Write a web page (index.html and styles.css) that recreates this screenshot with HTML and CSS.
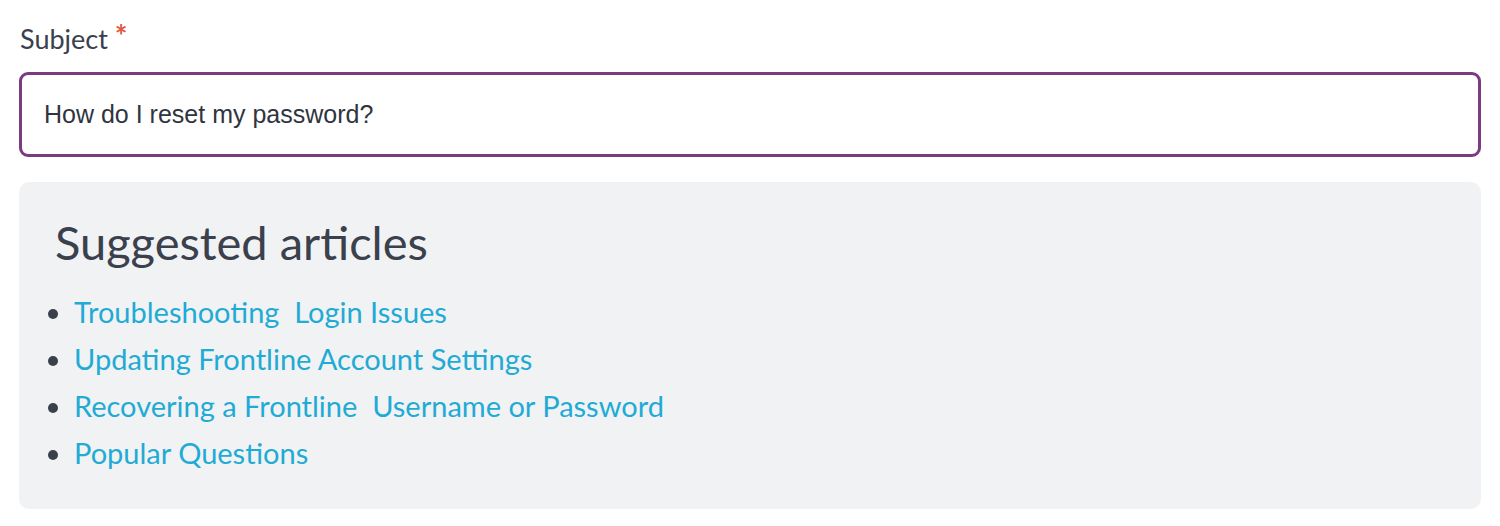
FILE: index.html
```html
<!DOCTYPE html>
<html>
<head>
<meta charset="utf-8">
<link rel="stylesheet" href="styles.css">
</head>
<body>
<div class="field">
  <label class="label">Subject <span class="req">*</span></label>
  <div class="input">How do I reset my password?</div>
</div>
<div class="suggest">
  <h2 class="suggest-title">Suggested articles</h2>
  <ul class="list">
    <li><a href="#">Troubleshooting&nbsp; Login Issues</a></li>
    <li><a href="#">Updating Frontline Account Settings</a></li>
    <li><a href="#">Recovering a Frontline&nbsp; Username or Password</a></li>
    <li><a href="#">Popular Questions</a></li>
  </ul>
</div>
</body>
</html>
```
FILE: styles.css
```css
html, body {
  margin: 0;
  padding: 0;
  background: #ffffff;
}
body {
  padding: 13px 19px 0 19px;
  font-family: Lato, "Liberation Sans", sans-serif;
  color: #3a404c;
}
.field {
  display: flex;
  flex-direction: column;
}
.label {
  font-size: 27px;
  line-height: 44px;
  color: #3a404c;
  padding-left: 1px;
}
.req {
  color: #e0593f;
  font-size: 30px;
  font-weight: 700;
  vertical-align: 2px;
}
.input {
  margin-top: 11px;
  border: 3px solid #7b3a82;
  border-radius: 9px;
  box-sizing: border-box;
  height: 85px;
  display: flex;
  align-items: center;
  padding-left: 22px;
  font-family: "Liberation Sans", Arial, sans-serif;
  font-size: 25px;
  color: #2f3540;
  margin-bottom: 25px;
}
.suggest {
  background: #f1f2f4;
  border-radius: 10px;
  padding: 30px 36px 33px 36px;
}
.suggest-title {
  margin: 0 0 16px 0;
  font-weight: 400;
  font-size: 47px;
  line-height: 60px;
  color: #3a404c;
}
.list {
  margin: 0;
  padding-left: 19px;
  font-size: 29px;
  line-height: 47px;
}
.list li {
  color: #3a404c;
}
.list a {
  color: #1fabd4;
  text-decoration: none;
}
```
